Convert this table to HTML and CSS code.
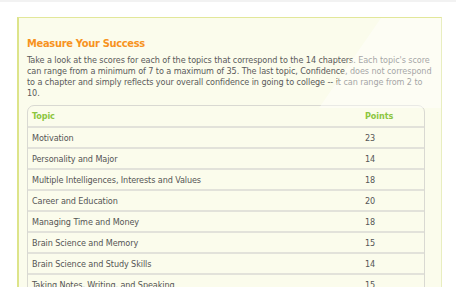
FILE: index.html
```html
<!DOCTYPE html>
<html>
<head>
<meta charset="utf-8">
<link rel="stylesheet" href="styles.css">
</head>
<body>
<div class="page">
  <div class="panel">
    <div class="gloss"></div>
    <h1 class="title">Measure Your Success</h1>
    <p class="intro">Take a look at the scores for each of the topics that correspond to the 14 chapters. Each topic's score<br>can range from a minimum of 7 to a maximum of 35. The last topic, Confidence, does not correspond<br>to a chapter and simply reflects your overall confidence in going to college -- it can range from 2 to<br>10.</p>
    <div class="table">
      <div class="row head"><span class="topic">Topic</span><span class="pts">Points</span></div>
      <div class="row"><span class="topic">Motivation</span><span class="pts">23</span></div>
      <div class="row"><span class="topic">Personality and Major</span><span class="pts">14</span></div>
      <div class="row"><span class="topic">Multiple Intelligences, Interests and Values</span><span class="pts">18</span></div>
      <div class="row"><span class="topic">Career and Education</span><span class="pts">20</span></div>
      <div class="row"><span class="topic">Managing Time and Money</span><span class="pts">18</span></div>
      <div class="row"><span class="topic">Brain Science and Memory</span><span class="pts">15</span></div>
      <div class="row"><span class="topic">Brain Science and Study Skills</span><span class="pts">14</span></div>
      <div class="row"><span class="topic">Taking Notes, Writing, and Speaking</span><span class="pts">15</span></div>
      <div class="row"><span class="topic">Test Taking</span><span class="pts">16</span></div>
    </div>
  </div>
</div>
</body>
</html>
```

FILE: styles.css
```css
html, body {
  margin: 0;
  padding: 0;
  background: #ffffff;
  overflow: hidden;
}
body {
  font-family: "DejaVu Sans Condensed", "DejaVu Sans", Tahoma, sans-serif;
  color: #555555;
  width: 456px;
  height: 287px;
  border-top: 2px solid #f2f2f2;
  box-sizing: border-box;
}
.page {
  padding: 15px 14px 0 17px;
}
.panel {
  position: relative;
  background: #fbfcec;
  border-left: 2px solid #dde48a;
  border-top: 1px solid #e2e79a;
  border-right: 1px solid #e9eec0;
  padding: 19px 8px 20px 8px;
  height: 300px;
}
.gloss {
  position: absolute;
  left: 0;
  top: 0;
  right: 0;
  height: 90px;
  background: rgba(255, 255, 255, 0.45);
  clip-path: polygon(362px 0, 100% 0, 100% 100%, 300px 100%);
  pointer-events: none;
}
.title {
  margin: 0;
  font-size: 11px;
  letter-spacing: -0.3px;
  line-height: 14px;
  font-weight: bold;
  color: #f7931e;
}
.intro {
  margin: 4px -12px 0 0;
  font-size: 9px;
  letter-spacing: -0.08px;
  line-height: 11px;
  color: #5a5a5a;
}
.table {
  margin-top: 6px;
  width: 396px;
  border: 1px solid #d9d9d2;
  border-radius: 7px;
  overflow: hidden;
}
.row {
  display: flex;
  height: 19px;
  align-items: center;
  border-top: 2px solid #e2e2da;
  font-size: 9px;
  letter-spacing: -0.1px;
  color: #555555;
}
.row.head {
  border-top: none;
  height: 20px;
  font-weight: bold;
  color: #8cc63f;
}
.topic {
  width: 333px;
  padding-left: 4px;
}
.pts {
  flex: 1;
}
```
